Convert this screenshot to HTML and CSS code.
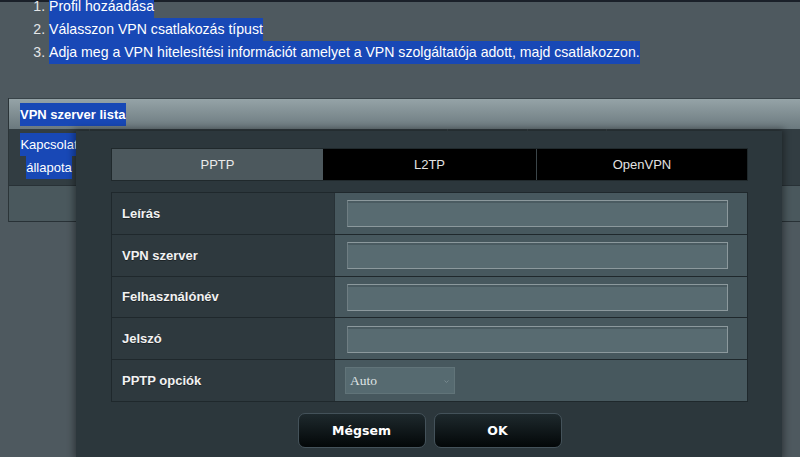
FILE: index.html
```html
<!DOCTYPE html>
<html lang="hu">
<head>
<meta charset="utf-8">
<title>VPN</title>
<link rel="stylesheet" href="styles.css">
</head>
<body>
<div class="topline"></div>
<ol class="steps">
  <li><span class="sel">Profil hozáadása</span></li>
  <li><span class="sel">Válasszon VPN csatlakozás típust </span></li>
  <li><span class="sel">Adja meg a VPN hitelesítési információt amelyet a VPN szolgáltatója adott, majd csatlakozzon.</span></li>
</ol>

<section class="server-list">
  <div class="list-head"><span class="sel">VPN szerver lista</span></div>
  <div class="list-row head-row">
    <div class="cell status"><span class="sel">Kapcsolat</span><br><span class="sel">állapota</span></div>
    <div class="cell c2"></div>
    <div class="cell c3"></div>
    <div class="cell c4"></div>
    <div class="cell c5"></div>
  </div>
  <div class="list-row empty-row"></div>
</section>

<div class="modal">
  <div class="tabs">
    <div class="tab active">PPTP</div>
    <div class="tab">L2TP</div>
    <div class="tab">OpenVPN</div>
  </div>
  <div class="form">
    <div class="frow"><div class="flabel">Leírás</div><div class="fvalue"><div class="input"></div></div></div>
    <div class="frow"><div class="flabel">VPN szerver</div><div class="fvalue"><div class="input"></div></div></div>
    <div class="frow"><div class="flabel">Felhasználónév</div><div class="fvalue"><div class="input"></div></div></div>
    <div class="frow"><div class="flabel">Jelszó</div><div class="fvalue"><div class="input"></div></div></div>
    <div class="frow"><div class="flabel">PPTP opciók</div><div class="fvalue"><div class="select"><span>Auto</span><svg class="arrow" width="5" height="3" viewBox="0 0 5 3"><polyline points="0.5,0.5 2.5,2.5 4.5,0.5" fill="none" stroke="#7f9095" stroke-width="0.8"/></svg></div></div></div>
  </div>
  <div class="buttons">
    <div class="btn">Mégsem</div>
    <div class="btn">OK</div>
  </div>
</div>
</body>
</html>
```
FILE: styles.css
```css
html, body {
  margin: 0;
  padding: 0;
}
body {
  width: 800px;
  height: 457px;
  overflow: hidden;
  position: relative;
  background: #4e595f;
  font-family: "Liberation Sans", Arial, sans-serif;
  color: #e6e6e6;
}
.topline {
  height: 2px;
  background: #1a2029;
}
.sel {
  display: inline-block;
  background: #1848b6;
  color: #ffffff;
}
.steps {
  margin: -7px 0 34px 0;
  padding-left: 49px;
  font-size: 14.1px;
  line-height: 23px;
  color: #e4e6e7;
}
.steps .sel {
  line-height: 23px;
}
.server-list {
  margin-left: 8px;
  border-left: 1px solid #2b3438;
}
.list-head {
  height: 30px;
  border-top: 1px solid #384348;
  background: linear-gradient(#95a3a7, #6b797e);
  display: flex;
  align-items: center;
  padding-left: 11px;
  font-size: 13px;
  font-weight: bold;
}
.list-head .sel {
  line-height: 23px;
}
.list-row {
  display: flex;
  border-bottom: 1px solid #283136;
}
.head-row {
  background: #323d42;
  height: 56px;
}
.cell {
  border-right: 1px solid #3d484d;
}
.status {
  width: 80px;
  text-align: center;
  font-size: 13px;
  line-height: 23px;
  padding-top: 4px;
}
.c2 { width: 357px; }
.c3 { width: 79px; }
.c4 { width: 78px; }
.c5 { flex: 1; border-right: none; }
.empty-row {
  height: 35px;
  background: #4a585d;
}

.modal {
  position: absolute;
  left: 76px;
  top: 131px;
  width: 637px;
  height: 309px;
  padding: 17px 34px 0 35px;
  background: #2c373c;
  box-shadow: 0 0 7px 2px rgba(0, 0, 0, 0.4);
}
.tabs {
  display: grid;
  grid-template-columns: 211px 213px 1fr;
  height: 33px;
  border: 1px solid #20292c;
  box-sizing: border-box;
  font-size: 13px;
}
.tab {
  background: #000;
  color: #e2e2e2;
  display: flex;
  align-items: center;
  justify-content: center;
}
.tab + .tab + .tab {
  border-left: 1px solid #3b4549;
}
.tab.active {
  background: #4c585d;
  color: #eaeaea;
}
.form {
  margin-top: 11px;
  border: 1px solid #1f282c;
  border-bottom: none;
}
.frow {
  display: flex;
  height: 40.8px;
  border-bottom: 1px solid #1f282c;
}
.flabel {
  width: 212px;
  padding-left: 10px;
  background: #2e393e;
  border-right: 1px solid #283237;
  display: flex;
  align-items: center;
  font-size: 13px;
  font-weight: bold;
  color: #f2f2f2;
  text-shadow: 0 1px 0 #1c2326;
}
.fvalue {
  flex: 1;
  background: #47585e;
  display: flex;
  align-items: center;
  padding-left: 12px;
}
.input {
  width: 379px;
  height: 25px;
  background: #586b71;
  border: 1px solid #8c999d;
  border-left-color: #6f7e83;
  box-shadow: inset 0 2px 0 #4a5b61;
  margin-top: 1px;
}
.select {
  height: 25px;
  margin-left: -2px;
  background: #566a70;
  border: 1px solid #617479;
  display: flex;
  align-items: center;
  justify-content: space-between;
  padding: 0 5px 0 4px;
  box-sizing: content-box;
  width: 99px;
  font-family: "Liberation Serif", "Times New Roman", serif;
  font-size: 13.5px;
  color: #dfe3e4;
}
.arrow {
  margin-top: 1px;
}
.buttons {
  display: flex;
  justify-content: center;
  gap: 8px;
  margin-top: 11px;
}
.btn {
  width: 126px;
  height: 33px;
  border: 1px solid #44525a;
  border-radius: 7px;
  background: linear-gradient(#1e292d, #030708);
  display: flex;
  align-items: center;
  justify-content: center;
  font-family: "DejaVu Sans", Verdana, sans-serif;
  font-weight: bold;
  font-size: 12.5px;
  color: #ffffff;
}
```
